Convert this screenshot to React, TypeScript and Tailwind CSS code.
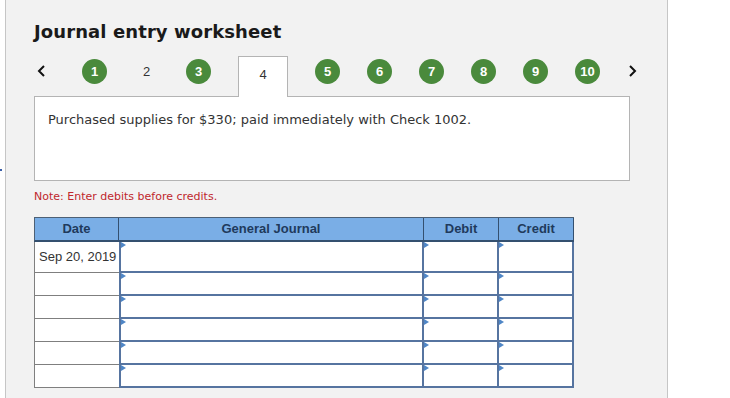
import React from 'react'

const DONE = [1, 3, 5, 6, 7, 8, 9, 10]
const CURRENT = 4
const STEPS = [1, 2, 3, 4, 5, 6, 7, 8, 9, 10]

const ROWS = [
  { date: 'Sep 20, 2019', tall: true },
  { date: '', tall: false },
  { date: '', tall: false },
  { date: '', tall: false },
  { date: '', tall: false },
  { date: '', tall: false },
]

function Marker() {
  return (
    <svg className="absolute left-0 top-0" width="6" height="7" viewBox="0 0 6 7">
      <polygon points="0,0 5,3 0,6" fill="#4f86c6" />
    </svg>
  )
}

function Chevron({ dir }: { dir: 'left' | 'right' }) {
  return (
    <svg width="9" height="12" viewBox="0 0 9 12">
      {dir === 'left' ? (
        <polyline points="7,1 2,6 7,11" fill="none" stroke="#111" strokeWidth="2" />
      ) : (
        <polyline points="2,1 7,6 2,11" fill="none" stroke="#111" strokeWidth="2" />
      )}
    </svg>
  )
}

export default function App() {
  return (
    <div className="relative w-[730px] h-[398px] bg-white overflow-hidden">
      {/* stray dot on the left edge */}
      <div className="absolute left-[0px] top-[169px] w-[2px] h-[2px] bg-[#3a5ea8]" />

      <div className="ml-[5px] w-[663px] h-full bg-[#f2f2f2] border-l border-r border-[#c6c6c6] pl-[28px] pt-[21px]">
        <h1 className="h-[22px] leading-[22px] text-[18px] font-bold text-[#1a1a1a] font-['DejaVu_Sans',Verdana,sans-serif] tracking-[0.1px]">
          Journal entry worksheet
        </h1>

        {/* step navigation */}
        <div className="mt-[13px] flex items-start h-[41px] gap-[27px] font-['Liberation_Sans',Arial,sans-serif]">
          <div className="w-[21px] h-[30px] flex items-center pl-[3px]">
            <Chevron dir="left" />
          </div>
          {STEPS.map((n) => {
            if (n === CURRENT) {
              return (
                <div
                  key={n}
                  className="relative z-10 w-[50px] h-[41px] bg-white border border-b-0 border-[#b4b4b4] flex justify-center pt-[8px] text-[13px] text-[#333]"
                >
                  {n}
                </div>
              )
            }
            if (DONE.includes(n)) {
              return (
                <div
                  key={n}
                  className="mt-[3px] w-[25px] h-[25px] rounded-full bg-[#4a8a3c] flex items-center justify-center text-[13px] font-bold text-white"
                >
                  {n}
                </div>
              )
            }
            return (
              <div key={n} className="mt-[3px] w-[25px] h-[25px] flex items-center justify-center text-[13px] text-[#333]">
                {n}
              </div>
            )
          })}
          <div className="h-[30px] flex items-center ml-[1px]">
            <Chevron dir="right" />
          </div>
        </div>

        {/* question box */}
        <div className="-mt-[1px] w-[596px] h-[85px] bg-white border border-[#b4b4b4] pl-[13px] pt-[15px]">
          <p className="text-[13px] leading-[16px] text-[#333] font-['DejaVu_Sans',Verdana,sans-serif]">
            Purchased supplies for $330; paid immediately with Check 1002.
          </p>
        </div>

        <p className="mt-[9px] text-[11px] leading-[14px] text-[#c0272d] font-['DejaVu_Sans',Verdana,sans-serif]">
          Note: Enter debits before credits.
        </p>

        {/* journal table */}
        <div className="mt-[13px] w-[540px] font-['Liberation_Sans',Arial,sans-serif]">
          <div className="flex h-[25px] bg-[#7aaee6] border-t border-l border-[#4d6075] border-b-2 border-b-[#34506f] text-[13px] font-bold text-[#1f3a5c]">
            <div className="w-[84px] border-r border-[#34506f] flex items-center justify-center">Date</div>
            <div className="w-[305px] border-r border-[#34506f] flex items-center justify-center">General Journal</div>
            <div className="w-[75px] border-r border-[#34506f] flex items-center justify-center">Debit</div>
            <div className="w-[75px] border-r border-[#34506f] flex items-center justify-center">Credit</div>
          </div>

          {ROWS.map((r, i) => (
            <div key={i} className={`flex ${r.tall ? 'h-[31px]' : 'h-[23px]'}`}>
              <div className="w-[85px] bg-white border-l border-b border-[#7f7f7f] pl-[4px] pt-[7px] text-[13px] leading-[16px] text-[#333]">
                {r.date}
              </div>
              <div className="relative w-[305px] bg-white border-l-2 border-r-2 border-b-2 border-[#5674a0]">
                <Marker />
              </div>
              <div className="relative w-[75px] bg-white border-r-2 border-b-2 border-[#5674a0]">
                <Marker />
              </div>
              <div className="relative w-[75px] bg-white border-r-2 border-b-2 border-[#5674a0]">
                <Marker />
              </div>
            </div>
          ))}
        </div>
      </div>
    </div>
  )
}
